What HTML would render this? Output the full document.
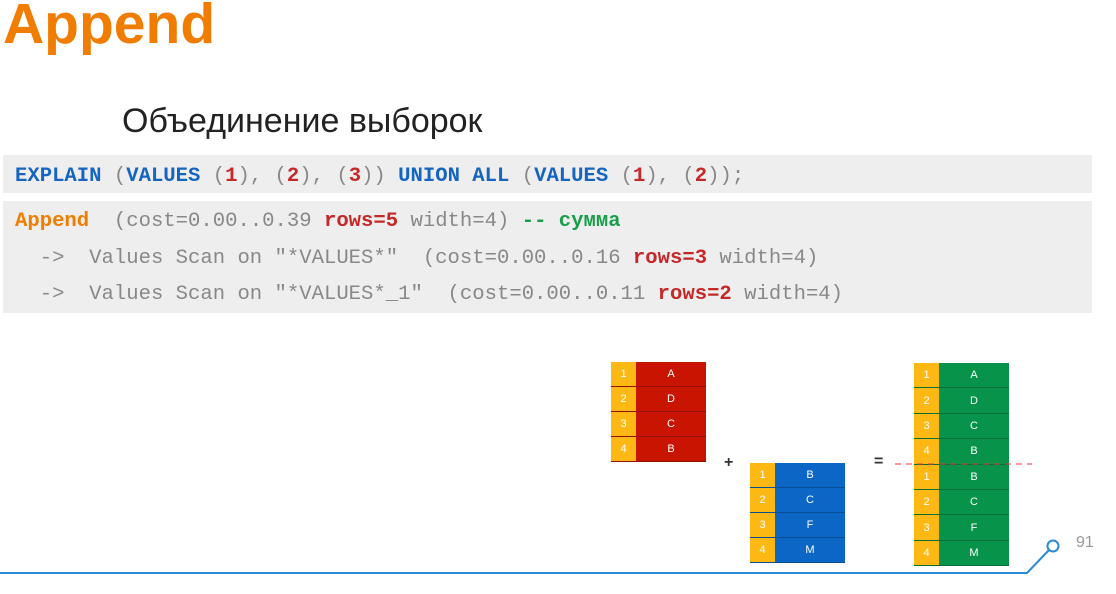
<!DOCTYPE html>
<html><head><meta charset="utf-8"><style>
body{margin:0;width:1116px;height:594px;background:#fff;position:relative;overflow:hidden;font-family:"Liberation Sans","DejaVu Sans",sans-serif}
.t{position:absolute;left:3px;top:-9px;font-size:57px;font-weight:bold;color:#f07d00}
.s{position:absolute;left:122px;top:102px;font-size:34px;color:#222}
.cb{position:absolute;left:3px;width:1089px;background:#eeeeee}
.c{position:absolute;left:15px;font-family:"Liberation Mono",monospace;font-size:20.6px;white-space:pre;color:#888}
.k{color:#1565c0;font-weight:bold}.n{color:#c62828;font-weight:bold}.o{color:#ef7d00;font-weight:bold}.g{color:#1b9e4b;font-weight:bold}
.tb{position:absolute;width:95px}
.r{display:flex;height:25px;border-bottom:1px solid rgba(0,0,0,.25);box-sizing:border-box;font-size:11px;color:#fff}
.r b{width:25px;background:#fdb813;font-weight:normal;display:flex;align-items:center;justify-content:center}
.r i{flex:1;font-style:normal;display:flex;align-items:center;justify-content:center}
</style></head><body>
<div class="t">Append</div>
<div class="s">Объединение выборок</div>
<div class="cb" style="top:155px;height:38px"></div>
<div class="cb" style="top:201px;height:112px"></div>
<div class="c" style="top:165px"><span class="k">EXPLAIN</span> (<span class="k">VALUES</span> (<span class="n">1</span>), (<span class="n">2</span>), (<span class="n">3</span>)) <span class="k">UNION ALL</span> (<span class="k">VALUES</span> (<span class="n">1</span>), (<span class="n">2</span>));</div>
<div class="c" style="top:210px"><span class="o">Append</span>  (cost=0.00..0.39 <span class="n">rows=5</span> width=4) <span class="g">-- сумма</span></div>
<div class="c" style="top:247px">  ->  Values Scan on "*VALUES*"  (cost=0.00..0.16 <span class="n">rows=3</span> width=4)</div>
<div class="c" style="top:283px">  ->  Values Scan on "*VALUES*_1"  (cost=0.00..0.11 <span class="n">rows=2</span> width=4)</div>

<div class="tb" style="left:611px;top:362px;background:#c81400">
<div class="r"><b>1</b><i>A</i></div><div class="r"><b>2</b><i>D</i></div><div class="r"><b>3</b><i>C</i></div><div class="r"><b>4</b><i>B</i></div></div>
<div class="tb" style="left:750px;top:463px;background:#0b66c6">
<div class="r"><b>1</b><i>B</i></div><div class="r"><b>2</b><i>C</i></div><div class="r"><b>3</b><i>F</i></div><div class="r"><b>4</b><i>M</i></div></div>
<div class="tb" style="left:914px;top:363px;background:#07944a">
<div class="r" style="height:25.4px"><b>1</b><i>A</i></div><div class="r" style="height:25.4px"><b>2</b><i>D</i></div><div class="r" style="height:25.4px"><b>3</b><i>C</i></div><div class="r" style="height:25.4px"><b>4</b><i>B</i></div>
<div class="r" style="height:25.4px"><b>1</b><i>B</i></div><div class="r" style="height:25.4px"><b>2</b><i>C</i></div><div class="r" style="height:25.4px"><b>3</b><i>F</i></div><div class="r" style="height:25.4px"><b>4</b><i>M</i></div></div>
<div style="position:absolute;left:724px;top:454px;font-size:16px;font-weight:bold;color:#333">+</div>
<div style="position:absolute;left:874px;top:453px;font-size:16px;font-weight:bold;color:#333">=</div>
<svg style="position:absolute;left:0;top:0" width="1116" height="594">
<line x1="895" y1="464" x2="1032" y2="464" stroke="#e53935" stroke-width="1" stroke-dasharray="6,5"/>
<polyline points="0,573 1027,573 1049,550" fill="none" stroke="#2a8ad4" stroke-width="2"/>
<circle cx="1053" cy="546" r="5.5" fill="#fff" stroke="#2a8ad4" stroke-width="2"/>
</svg>
<div style="position:absolute;left:1076px;top:534px;font-size:16px;color:#999">91</div>
</body></html>
